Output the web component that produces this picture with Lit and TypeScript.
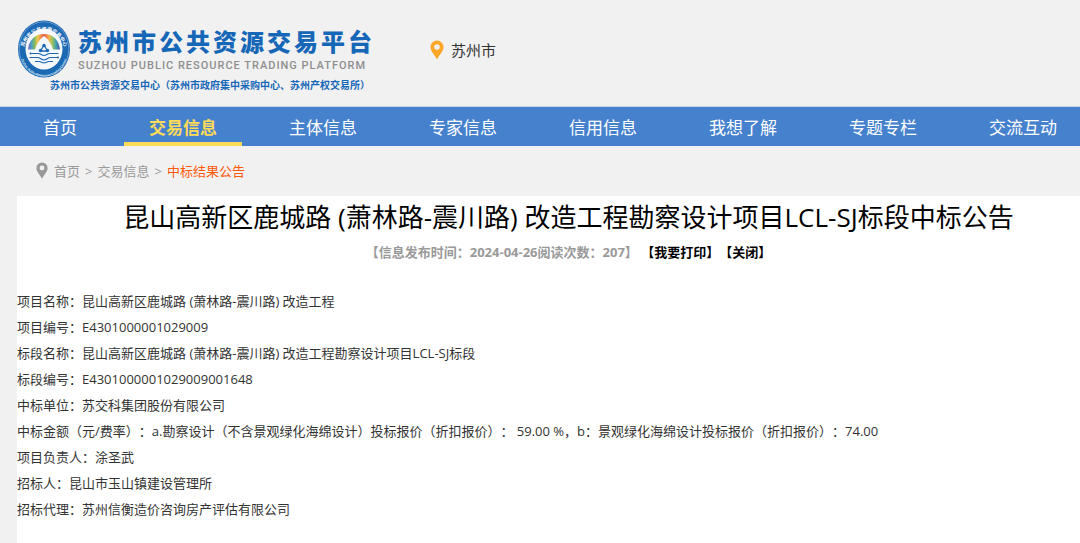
import { LitElement, html, css } from "lit";
import { customElement } from "lit/decorators.js";
import { classMap } from "lit/directives/class-map.js";

@customElement("site-emblem")
class SiteEmblem extends LitElement {
  static styles = css`
    :host { display: block; }
    svg { display: block; }
    .ring { font: 700 5px "Noto Sans CJK SC", sans-serif; fill: #fff; }
    .ring-en { font: 700 3px "Open Sans", sans-serif; fill: #d5e6f7; }
  `;
  render() {
    return html`
      <svg width="54" height="58" viewBox="0 0 54 58" aria-hidden="true">
        <defs>
          <linearGradient id="rainbow" x1="0" x2="1" y1="0" y2="0">
            <stop offset="0" stop-color="#7a62b0" />
            <stop offset="0.1" stop-color="#4f9bd0" />
            <stop offset="0.2" stop-color="#7dba62" />
            <stop offset="0.3" stop-color="#f0c64c" />
            <stop offset="0.5" stop-color="#ea5a4c" />
            <stop offset="0.66" stop-color="#f3b54b" />
            <stop offset="0.76" stop-color="#9cc45e" />
            <stop offset="0.88" stop-color="#3f9fae" />
            <stop offset="1" stop-color="#4a55a8" />
          </linearGradient>
          <path id="top-arc" d="M6.500 33A20.500 22.500 0 1 1 47.500 33" />
          <path id="low-arc" d="M3.500 32A23.500 24.500 0 0 0 50.500 32" />
        </defs>
        <ellipse cx="27" cy="29" rx="26" ry="28.500" fill="#1b68b3" />
        <ellipse cx="27" cy="29" rx="24.800" ry="27.200" fill="none" stroke="#8dbbe3" stroke-width="0.6" />
        <ellipse cx="27" cy="29" rx="18.500" ry="20.500" fill="#f5f8fb" />
        <text class="ring"><textPath href="#top-arc" startOffset="50%" text-anchor="middle">苏州市公共资源交易中心</textPath></text>
        <text class="ring-en"><textPath href="#low-arc" startOffset="50%" text-anchor="middle">Suzhou Public Resources Trading Center</textPath></text>
        <path d="M11 29.500C12 20 18 14 27 14S42 20 43 29.500H36C34.500 24 31.500 19.500 27 16C22.500 19.500 19.500 24 18 29.500Z" fill="url(#rainbow)" />
        <g fill="none" stroke="#1b68b3">
          <path d="M27 25L23.500 31H30.500Z" stroke-width="1.300" />
          <path d="M13.500 33.500H21c3 0 3.500 2 6 2s3-2 6-2h8.500M12.500 37.500H20c3.500 0 4 2.500 7 2.500s3.500-2.500 7-2.500h7M18 41.500h4c2 0 3 1.500 5 1.500s3-1.500 5-1.500h4" stroke-width="1.200" />
        </g>
        <g fill="#1b68b3">
          <circle cx="27" cy="25.500" r="1.700" />
          <circle cx="23.500" cy="30.500" r="1.700" />
          <circle cx="30.500" cy="30.500" r="1.700" />
          <circle cx="13.500" cy="33.500" r="1" />
          <circle cx="41" cy="37.500" r="1" />
        </g>
      </svg>
    `;
  }
}

@customElement("map-pin")
class MapPin extends LitElement {
  static styles = css`
    :host { display: block; }
    svg { display: block; width: 100%; }
  `;
  render() {
    return html`
      <svg viewBox="0 0 14 20" aria-hidden="true">
        <path fill="currentColor" fill-rule="evenodd" d="M7 0.500a6.500 6.500 0 0 0-6.500 6.500C0.500 11.500 4.500 14.500 7 19.500C9.500 14.500 13.500 11.500 13.500 7A6.500 6.500 0 0 0 7 0.500ZM7 4.200a2.800 2.800 0 1 1 0 5.600a2.800 2.800 0 0 1 0-5.600Z" />
      </svg>
    `;
  }
}

@customElement("app-root")
class AppRoot extends LitElement {
  static styles = css`
    :host {
      display: flex;
      flex-direction: column;
      min-height: 100vh;
      background: #f1f1f1;
      color: #333;
      font: 13px/26px "Open Sans", "Noto Sans CJK SC", sans-serif;
      text-spacing-trim: space-all;
      overflow: hidden;
    }
    a { color: inherit; text-decoration: none; }
    .top { display: flex; height: 106px; padding-left: 17px; box-sizing: border-box; }
    .emblem { padding-top: 20px; }
    .brand { display: flex; flex-direction: column; padding-top: 24px; width: 340px; white-space: nowrap; }
    .name { margin: 0; padding-left: 7px; font: 900 24px/34px "Noto Sans CJK SC", sans-serif; letter-spacing: 3px; color: #1667b8; }
    .latin { padding-left: 7px; font: 500 11px/16px Roboto, sans-serif; letter-spacing: 1px; color: #8e8e8e; }
    .center { margin-left: -21px; font: 700 10px/22px "Noto Sans CJK SC", sans-serif; color: #1667b8; }
    .city { display: flex; align-items: center; gap: 7px; height: 26px; margin-top: 37px; margin-left: 19px; font-size: 15px; }
    .city map-pin { width: 14px; color: #fca728; }
    nav { display: flex; flex: none; gap: 22px; height: 40px; padding-left: 18px; background: #4681ce; border-top: 1px solid #c3d3ea; box-sizing: border-box; }
    .item { flex: none; padding: 0 25px; font-size: 17px; line-height: 41px; color: #fff; box-sizing: border-box; height: 39px; }
    .current { font-weight: 700; color: #ffdb57; border-bottom: 4px solid #ffdb57; }
    .crumbs { display: flex; align-items: center; gap: 5px; height: 50px; padding-left: 36px; color: #999; }
    .crumbs map-pin { width: 12px; margin-right: 1px; }
    .here { color: #ff5a0c; }
    main { flex: 1; margin-left: 17px; background: #fff; }
    .heading { padding-left: 40px; text-align: center; }
    h1 { margin: 0; font-size: 26px; line-height: 42px; font-weight: 400; color: #000; }
    .meta { margin: 0; padding-top: 1px; font-weight: 700; color: #999; }
    button { padding: 0; border: 0; background: none; font: inherit; color: #000; cursor: pointer; }
    dl { margin: 0; padding: 23px 0; }
    .row { display: flex; }
    dt { flex: none; }
    dd { margin: 0; white-space: pre-wrap; }
  `;

  private menu = ["首页", "交易信息", "主体信息", "专家信息", "信用信息", "我想了解", "专题专栏", "交流互动"];

  private details: [string, string][] = [
    ["项目名称：", "昆山高新区鹿城路 (萧林路-震川路) 改造工程"],
    ["项目编号：", "E4301000001029009"],
    ["标段名称：", "昆山高新区鹿城路 (萧林路-震川路) 改造工程勘察设计项目LCL-SJ标段"],
    ["标段编号：", "E4301000001029009001648"],
    ["中标单位：", "苏交科集团股份有限公司"],
    ["中标金额（元/费率）：", "a.勘察设计（不含景观绿化海绵设计）投标报价（折扣报价）： 59.00 %，b：景观绿化海绵设计投标报价（折扣报价）：74.00"],
    ["项目负责人：", "涂圣武"],
    ["招标人：", "昆山市玉山镇建设管理所"],
    ["招标代理：", "苏州信衡造价咨询房产评估有限公司"],
  ];

  render() {
    return html`
      <header class="top">
        <site-emblem class="emblem"></site-emblem>
        <div class="brand">
          <p class="name">苏州市公共资源交易平台</p>
          <span class="latin">SUZHOU PUBLIC RESOURCE TRADING PLATFORM</span>
          <span class="center">苏州市公共资源交易中心（苏州市政府集中采购中心、苏州产权交易所）</span>
        </div>
        <div class="city"><map-pin></map-pin><span>苏州市</span></div>
      </header>
      <nav>
        ${this.menu.map((label, i) => html`<a href="#" class=${classMap({ item: true, current: i === 1 })}>${label}</a>`)}
      </nav>
      <div class="crumbs">
        <map-pin></map-pin><a href="#">首页</a><span>&gt;</span><a href="#">交易信息</a><span>&gt;</span><a href="#" class="here">中标结果公告</a>
      </div>
      <main>
        <div class="heading">
          <h1>昆山高新区鹿城路 (萧林路-震川路) 改造工程勘察设计项目LCL-SJ标段中标公告</h1>
          <p class="meta">【信息发布时间：2024-04-26阅读次数：207】 <button>【我要打印】</button><button>【关闭】</button></p>
        </div>
        <dl>
          ${this.details.map(([term, value]) => html`<div class="row"><dt>${term}</dt><dd>${value}</dd></div>`)}
        </dl>
      </main>
    `;
  }
}
